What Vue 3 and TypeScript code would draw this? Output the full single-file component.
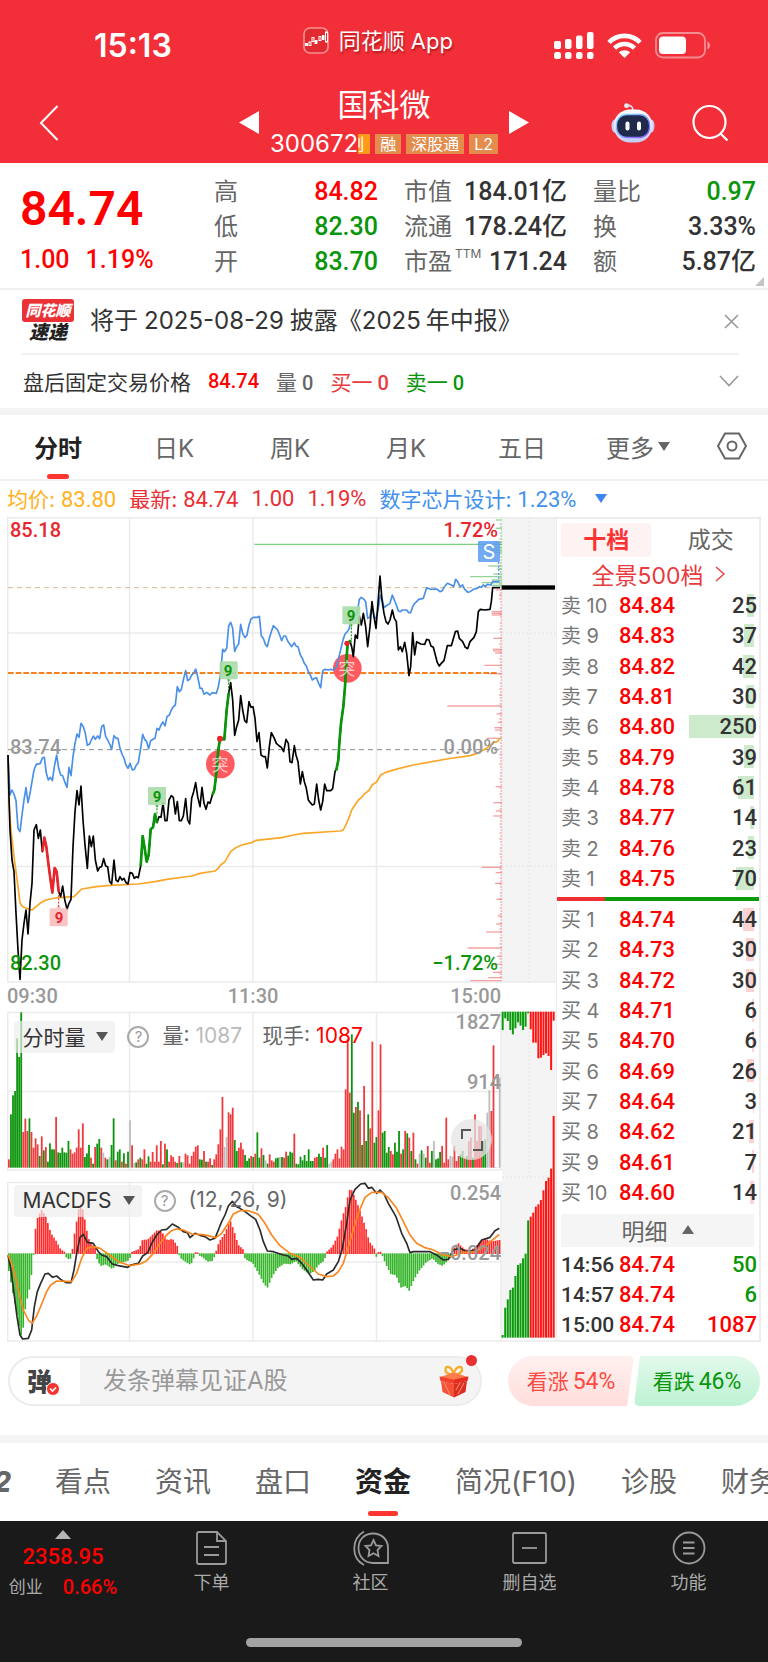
<script setup lang="ts">
import { ref } from 'vue'

type Tone = 'up' | 'down' | 'ink'
interface Stat { label: string; note?: string; value: string; tone: Tone }
interface Level { label: string; price: string; volume: number }
interface Bar { x: number; y: number; w: number; h: number; fill: string }

const RED = '#ef3b3f'
const GREEN = '#0c950c'
const GREY = '#bdbdbd'

const statColumns: Stat[][] = [
  [
    { label: '高', value: '84.82', tone: 'up' },
    { label: '低', value: '82.30', tone: 'down' },
    { label: '开', value: '83.70', tone: 'down' },
  ],
  [
    { label: '市值', value: '184.01亿', tone: 'ink' },
    { label: '流通', value: '178.24亿', tone: 'ink' },
    { label: '市盈', note: 'TTM', value: '171.24', tone: 'ink' },
  ],
  [
    { label: '量比', value: '0.97', tone: 'down' },
    { label: '换', value: '3.33%', tone: 'ink' },
    { label: '额', value: '5.87亿', tone: 'ink' },
  ],
]

const periods = ['分时', '日K', '周K', '月K', '五日', '更多']
const period = ref('分时')

const bookTabs = ['十档', '成交']
const bookTab = ref('十档')

const level = (side: string) => ([n, price, volume]: [number, string, number]): Level =>
  ({ label: `${side} ${n}`, price, volume })

const asks: Level[] = ([
  [10, '84.84', 25], [9, '84.83', 37], [8, '84.82', 42], [7, '84.81', 30], [6, '84.80', 250],
  [5, '84.79', 39], [4, '84.78', 61], [3, '84.77', 14], [2, '84.76', 23], [1, '84.75', 70],
] as [number, string, number][]).map(level('卖'))

const bids: Level[] = ([
  [1, '84.74', 44], [2, '84.73', 30], [3, '84.72', 30], [4, '84.71', 6], [5, '84.70', 6],
  [6, '84.69', 26], [7, '84.64', 3], [8, '84.62', 21], [9, '84.61', 7], [10, '84.60', 14],
] as [number, string, number][]).map(level('买'))

const trades = [
  { time: '14:56', price: '84.74', volume: 50, tone: 'down' },
  { time: '14:57', price: '84.74', volume: 6, tone: 'down' },
  { time: '15:00', price: '84.74', volume: 1087, tone: 'up' },
]

const sections = ['看点', '资讯', '盘口', '资金', '简况(F10)', '诊股', '财务']
const section = ref('资金')

/* Chart series use thirds of a pixel as their unit; the group that holds them scales down. */
const price =
  '24,735 27,860 30,960 36,1050 42,1085 48,1210 54,1320 60,1408 66,1290 72,1240 78,1200 84,1272 90,1180 96,1120 102,960 109,944 115,985 121,960 127,1025 133,983 139,1010 145,1060 151,1105 157,1148 164,1074 170,1085 176,1145 182,1160 188,1128 194,1168 201,1198 207,1180 213,1168 219,1010 225,905 231,842 237,885 243,828 249,930 255,1005 262,1075 268,978 274,1010 280,978 286,1050 293,1083 299,1072 305,1070 311,1046 317,1068 323,1070 329,1115 335,1122 342,1050 348,1110 354,1115 360,1100 366,1110 372,1105 378,1118 384,1122 390,1088 397,1090 403,1105 409,1100 415,1103 422,1068 428,978 434,1015 440,1055 446,1035 452,958 459,952 465,912 471,938 477,920 483,922 489,878 495,932 501,932 507,870 514,857 520,862 526,912 532,875 538,932 544,932 550,918 557,866 563,930 569,942 575,865 581,845 587,818 593,860 600,890 606,832 612,880 618,898 624,876 630,880 637,855 643,840 649,790 655,720 660,686 673,688 680,600 686,550 692,518 698,570 704,676 710,650 716,630 722,557 728,600 734,632 740,638 747,575 753,592 759,590 765,625 771,695 777,668 783,735 790,740 796,740 802,774 808,710 814,668 823,685 829,700 838,708 844,712 851,725 858,688 865,700 870,755 876,758 883,707 888,735 894,755 901,822 907,785 913,815 919,835 925,870 931,878 937,885 943,882 950,822 956,870 962,900 968,875 974,822 980,842 992,842 998,836 1005,785 1010,775 1015,750 1018,700 1023,640 1030,590 1035,530 1040,440 1043,400 1050,393 1055,410 1060,440 1066,375 1072,385 1078,318 1084,345 1090,310 1097,350 1103,410 1110,350 1116,275 1122,320 1128,355 1134,280 1140,198 1146,270 1152,310 1158,335 1164,342 1170,330 1177,300 1183,325 1189,335 1195,420 1201,410 1207,425 1214,397 1220,430 1227,497 1232,470 1238,368 1244,435 1250,395 1262,402 1274,403 1280,388 1287,390 1293,408 1300,412 1306,435 1312,458 1318,468 1324,460 1332,452 1342,407 1354,407 1366,365 1373,363 1378,385 1388,395 1396,412 1403,416 1410,395 1422,382 1429,365 1435,305 1441,298 1453,300 1470,298 1474,275 1478,233 1500,233'
const sector =
  '24,735 27,800 30,855 36,840 42,852 48,872 54,955 60,965 66,915 72,870 78,833 84,878 90,850 96,815 102,780 109,763 121,760 127,744 133,742 139,790 145,810 151,802 157,812 163,770 170,735 176,775 182,795 188,797 194,815 201,832 207,772 213,797 219,740 225,700 231,672 237,682 243,640 250,650 256,670 262,706 268,703 274,690 280,678 286,688 293,678 299,686 305,650 311,645 317,680 323,690 329,702 335,718 342,677 348,685 354,685 360,715 366,732 372,745 378,765 384,775 390,760 397,780 403,778 409,765 415,758 422,715 428,673 434,688 440,695 446,716 452,692 459,688 465,685 471,655 477,660 483,645 489,636 495,648 501,620 508,615 514,600 520,590 526,585 532,530 538,545 544,538 550,510 557,482 563,512 569,508 575,495 581,490 587,477 593,500 600,535 606,535 612,553 620,547 630,555 637,548 649,550 655,530 662,490 668,418 673,425 680,415 686,348 692,337 698,355 704,424 710,410 716,402 722,343 728,370 735,383 741,375 747,345 753,327 760,322 772,322 778,319 784,378 790,385 796,403 802,410 808,385 814,365 820,347 833,360 839,375 845,392 851,378 857,378 863,393 875,410 883,398 888,408 894,410 901,435 907,445 913,460 919,468 925,485 931,495 937,510 943,505 949,503 956,520 962,533 968,483 974,478 986,480 992,478 1000,480 1010,470 1017,440 1023,415 1029,390 1035,372 1042,365 1048,355 1053,320 1060,310 1066,315 1072,308 1078,268 1084,262 1092,268 1097,275 1103,325 1109,322 1116,290 1122,320 1128,325 1134,300 1141,255 1147,270 1152,293 1158,288 1170,280 1177,255 1183,270 1189,285 1195,303 1201,305 1207,300 1220,300 1226,308 1232,308 1238,290 1244,280 1250,275 1256,268 1270,265 1280,233 1292,238 1310,237 1320,245 1326,243 1332,232 1342,220 1354,225 1361,230 1367,208 1373,215 1380,230 1388,225 1394,238 1404,247 1410,245 1422,237 1432,235 1438,230 1444,232 1450,225 1456,230 1462,223 1472,225 1478,215 1498,215'
const average =
  '24,735 27,880 33,960 42,1040 50,1100 60,1178 68,1190 80,1195 96,1200 108,1190 120,1180 133,1172 150,1167 175,1163 222,1160 234,1148 245,1137 290,1130 330,1126 415,1122 465,1115 500,1108 575,1098 600,1090 645,1083 655,1075 662,1065 675,1055 692,1025 704,1015 725,1005 755,998 768,991 845,983 880,975 910,970 1020,963 1030,960 1042,935 1048,920 1055,900 1065,885 1075,870 1085,862 1092,853 1108,840 1116,825 1130,816 1142,795 1155,788 1195,776 1240,765 1280,758 1340,747 1410,737 1432,730 1460,715 1480,698 1492,695 1500,685'
const redRun = '127,1025 133,983 139,1010 145,1060 151,1105 157,1148 164,1074 170,1085 176,1145'
const greenRuns = [
  '422,1068 428,978 434,1015 440,1055 446,1035 452,958 459,952 465,912 471,938',
  '637,855 643,840 649,790 655,720 660,686 673,688 680,600 686,550',
  '1008,782 1010,775 1015,750 1018,700 1023,640 1030,590 1035,530 1040,440 1043,400 1050,393 1054,396',
]

const dif =
  '24,765 33,810 42,880 51,950 60,1005 68,1017 85,1015 95,990 103,920 112,875 122,850 135,822 145,820 158,832 170,828 182,838 190,843 200,848 213,848 222,810 230,760 240,712 250,703 262,727 280,730 295,755 305,765 320,770 337,792 355,797 383,802 392,795 415,790 428,768 443,758 455,730 470,705 485,690 500,688 517,672 535,682 550,695 562,698 570,713 585,700 600,706 615,710 630,720 645,715 655,690 665,665 675,645 685,618 697,604 710,620 720,625 735,635 755,650 767,658 780,690 790,725 802,753 820,755 850,765 865,768 875,778 890,775 905,790 920,810 940,840 955,838 968,840 980,822 1000,810 1015,785 1027,745 1040,670 1050,600 1065,568 1082,552 1095,550 1105,565 1115,562 1130,580 1140,570 1152,582 1165,610 1188,650 1205,700 1220,730 1230,758 1240,755 1290,755 1310,765 1330,780 1345,778 1360,750 1380,745 1400,755 1425,750 1445,720 1470,712 1485,692 1498,685'
const dea =
  '24,765 35,790 45,825 55,870 70,930 85,960 96,970 110,948 125,912 140,875 152,855 170,843 215,845 230,820 245,775 260,745 280,740 300,745 325,762 355,785 390,797 420,792 440,782 460,760 480,730 500,705 515,692 530,687 550,690 575,702 610,704 648,713 665,700 685,670 700,642 720,632 745,632 775,643 795,670 815,705 840,737 870,760 900,772 925,795 955,822 980,830 1000,828 1015,815 1030,790 1045,740 1060,690 1075,640 1095,592 1115,577 1145,577 1165,593 1190,625 1210,665 1230,705 1250,730 1275,743 1300,750 1325,763 1355,770 1390,757 1425,755 1450,742 1475,722 1498,703'

const PITCH = 6.16
const volumeCode =
  'r25 g160 g217 g230 g388 g332 g466 r107 r147 r110 g148 r107 r60 r88 r70 g35 r94 g52 r62 g18 g73 g55 g55 r152 g46 g44 g60 g46 g45 g80 r55 r42 r46 r60 r115 r60 r133 g32 g43 g68 r30 g12 r62 g72 g86 r60 n45 r30 g25 n32 g68 g148 r22 g48 g55 r18 g43 r12 g48 n142 r67 n14 g16 r25 g30 r25 r55 g12 g34 r18 r47 r18 r67 r18 r80 g10 r72 g55 r18 r37 r32 r18 g14 r35 g16 n16 r42 r37 r12 r35 r48 r63 r67 g25 g24 r50 g18 r18 r28 g8 r25 r40 r70 r115 r212 n62 n92 r166 r160 r180 g83 g50 r60 r75 r55 g38 g20 g28 r35 g32 r42 g106 g30 r58 g38 n22 g12 r40 r22 r18 g28 g30 n32 g32 r30 r48 g36 g48 g45 r102 g12 g10 g33 g22 g38 g20 g55 g20 g20 r30 r32 g42 g32 r60 g30 g68 n12 n18 r25 r42 r55 r28 r63 r55 r235 r385 r225 g400 g165 r182 g197 r172 g68 r245 g80 g160 r118 r378 g75 g92 r172 r370 g105 g110 g45 g62 r50 r40 g75 g48 g110 r42 g55 r110 g103 r90 g50 r105 g25 r12 n42 g52 n42 g30 r65 r15 g50 n80 g25 g28 g47 r65 r15 r150 r25 n35 n33 r65 r20 r35 g40 g50 r30 g35 r80 r90 g30 r160 r80 r125 r125 g80 g85 n165 n232 r170 r367 n2 n1 n270'
const tones: Record<string, string> = { r: RED, g: GREEN, n: GREY }
const volumeBars: Bar[] = volumeCode.split(' ').map((code, i) => {
  const h = Number(code.slice(1))
  return { x: 24 + i * PITCH, y: 503 - h, w: 5.4, h, fill: tones[code[0]] }
})

const macdKnots: [number, number][] = [
  [24, -50], [33, -100], [45, -160], [60, -245], [66, -230], [75, -150], [85, -110], [97, -25], [100, 50], [110, 105],
  [122, 130], [135, 110], [150, 60], [165, 38], [180, 10], [190, 5], [195, -8], [205, -16], [213, -10], [217, 35],
  [225, 80], [233, 130], [242, 150], [252, 100], [262, 45], [275, 25], [283, 15], [290, -20], [300, -35], [315, -30],
  [335, -45], [345, -30], [365, -25], [385, -18], [392, 3], [415, 12], [425, 40], [440, 40], [455, 55], [470, 70],
  [485, 60], [500, 38], [515, 43], [530, 20], [537, -10], [550, -20], [570, -32], [580, -8], [587, 8], [593, -3],
  [605, -8], [620, -22], [635, -20], [645, 3], [655, 35], [670, 55], [688, 98], [700, 65], [712, 25], [728, 10],
  [733, -15], [755, -25], [775, -60], [790, -90], [800, -100], [815, -65], [830, -42], [850, -28], [870, -30],
  [885, -20], [905, -45], [925, -60], [940, -50], [955, -30], [970, -20], [977, 3], [995, 20], [1010, 50], [1025, 110],
  [1035, 140], [1045, 190], [1053, 188], [1065, 160], [1080, 120], [1095, 75], [1105, 35], [1120, 15], [1128, -12],
  [1135, 10], [1145, -5], [1155, -30], [1170, -60], [1185, -62], [1200, -100], [1215, -95], [1225, -110], [1240, -75],
  [1255, -50], [1275, -25], [1295, -12], [1310, -28], [1325, -35], [1340, -20], [1355, -5], [1362, 20], [1372, 30],
  [1390, 12], [1410, 8], [1430, 25], [1450, 45], [1470, 35], [1504, 40],
]
function macdAt(x: number): number {
  for (let i = 1; i < macdKnots.length; i++) {
    const [x0, v0] = macdKnots[i - 1]
    const [x1, v1] = macdKnots[i]
    if (x <= x1) return v0 + ((v1 - v0) * (x - x0)) / (x1 - x0)
  }
  return 0
}
const macdBars: Bar[] = Array.from({ length: 240 }, (_, i) => {
  const x = 24 + i * PITCH
  const v = macdAt(x)
  const h = Math.abs(v) + 3
  return { x, y: v > 0 ? 762 - h : 760, w: 5, h, fill: v > 0 ? '#ff2b2b' : '#35b52a' }
})

const ladder: [number, number][] = [
  [30, 18], [55, 18], [97, 20], [103, 26], [112, 60], [120, 34], [127, 22], [168, 40], [177, 14], [192, 25], [200, 95],
  [210, 30], [218, 60], [226, 30], [240, 18], [255, 8], [305, 30], [310, 30], [315, 30], [385, 25], [418, 26],
  [423, 26], [429, 20], [466, 52], [491, 40], [555, 8], [588, 163], [612, 15], [637, 12], [653, 22], [660, 20],
  [685, 45], [733, 7], [830, 18], [878, 25], [903, 18], [918, 25], [1072, 60], [1088, 18], [1120, 20], [1168, 16],
  [1218, 12], [1242, 16], [1266, 47], [1314, 102], [1339, 14], [1363, 30], [1387, 26], [1403, 40], [1412, 95],
]
for (let y = 42; y < 1410; y += 9) ladder.push([y, 3 + ((y * 7) % 5)])

const depthTop = [55, 20, 28, 55, 68, 50, 32, 42, 55, 45, 5, 53, 93, 93, 140, 138, 130, 125, 133, 175, 27]
const depthBottom = [8, 90, 115, 143, 150, 185, 218, 223, 238, 252, 352, 363, 375, 393, 400, 413, 442, 470, 480, 507, 665]
const depthTone = (i: number, split: number) => (i < split ? '#0a9b0a' : '#ff1414')
</script>

<template>
  <div class="page">
    <header class="top">
      <div class="status">
        <span class="clock">15:13</span>
        <span class="app-name">
          <svg width="26" height="27" viewBox="0 0 26 27" aria-hidden="true">
            <rect x="1" y="1" width="24" height="25" rx="6" fill="#e02a30" stroke="#f88f92" stroke-width="1.6" />
            <g fill="#fff"><rect x="2" y="16" width="3" height="3" /><rect x="11.500" y="13" width="3" height="4" /><rect x="19" y="8" width="2.500" height="5" /></g>
            <g fill="none" stroke="#fff" stroke-width="1"><rect x="6" y="15" width="2" height="3.500" /><rect x="9" y="10.500" width="2" height="4" /><rect x="16" y="9.500" width="2" height="4" /><rect x="22.500" y="5" width="2" height="10" /></g>
          </svg>
          同花顺 App
        </span>
        <span class="signals">
          <svg width="40" height="28" viewBox="0 0 40 28" fill="#fff" aria-label="信号">
            <rect x="0" y="9" width="7" height="8" rx="2" /><rect x="11" y="7" width="6.500" height="10" rx="2" />
            <rect x="22" y="3.500" width="6.500" height="13.500" rx="2" /><rect x="33" y="0" width="6.500" height="17" rx="2" />
            <rect x="0" y="20" width="7" height="7" rx="2.500" /><rect x="11" y="20" width="6.500" height="7" rx="2.500" />
            <rect x="22" y="20" width="6.500" height="7" rx="2.500" /><rect x="33" y="20" width="6.500" height="7" rx="2.500" />
          </svg>
          <svg width="35" height="25" viewBox="0 0 35 25" aria-label="无线网络">
            <g fill="none" stroke="#fff" stroke-width="4.600"><path d="M2 9.500C10.500 0.700 24.500 0.700 33 9.500" /><path d="M7.500 15.200C13 9.600 22 9.600 27.500 15.200" /></g>
            <path d="M11.800 19.300C15 16.400 20 16.400 23.200 19.300L17.500 25Z" fill="#fff" />
          </svg>
          <svg width="56" height="27" viewBox="0 0 56 27" aria-label="电量">
            <rect x="1" y="1" width="49" height="24.500" rx="7" fill="none" stroke="#fff" stroke-opacity=".45" stroke-width="1.800" />
            <rect x="4" y="4.500" width="27" height="17.500" rx="4" fill="#fff" />
            <path d="M52.500 9.500C55.800 11 55.800 16 52.500 17.500Z" fill="#fff" fill-opacity=".5" />
          </svg>
        </span>
      </div>

      <div class="title-bar">
        <button class="icon-btn back" aria-label="返回">
          <svg width="20" height="36" viewBox="0 0 20 36"><path d="M18.500 1L2 18L18.500 35" fill="none" stroke="#fff" stroke-width="2" /></svg>
        </button>
        <div class="stock">
          <button class="icon-btn" aria-label="上一只">
            <svg width="20" height="23" viewBox="0 0 20 23"><path d="M20 0V23L0 11.500Z" fill="#fff" /></svg>
          </button>
          <div class="identity">
            <h1>国科微</h1>
            <p class="code"><span>300672</span><i class="tag board">创</i><i class="tag">融</i><i class="tag">深股通</i><i class="tag">L2</i></p>
          </div>
          <button class="icon-btn" aria-label="下一只">
            <svg width="20" height="23" viewBox="0 0 20 23"><path d="M0 0V23L20 11.500Z" fill="#fff" /></svg>
          </button>
        </div>
        <div class="tools">
          <button class="icon-btn" aria-label="智能助手">
            <svg width="44" height="40" viewBox="0 0 44 40">
              <defs>
                <linearGradient id="shell" x1="0" y1="0" x2="0" y2="1"><stop offset="0" stop-color="#fff" /><stop offset="1" stop-color="#c3cdf5" /></linearGradient>
                <linearGradient id="rim" x1="0" y1="0" x2="1" y2="1"><stop offset="0" stop-color="#7fe3ff" /><stop offset="1" stop-color="#8d52ff" /></linearGradient>
              </defs>
              <path d="M15.500 2.500C20 2 22 4 22 7.500" fill="none" stroke="#dfe4fa" stroke-width="1.600" />
              <circle cx="15.500" cy="2.700" r="2.400" fill="#e8ebfb" />
              <ellipse cx="3.500" cy="23" rx="3" ry="6.500" fill="#c9cdf2" /><ellipse cx="40.500" cy="23" rx="3" ry="6.500" fill="#c9cdf2" />
              <rect x="2.500" y="6.500" width="39" height="33" rx="16.500" fill="url(#shell)" />
              <rect x="5.500" y="11.500" width="33" height="23" rx="10" fill="#1f2a4c" stroke="url(#rim)" stroke-width="1.300" />
              <rect x="14.500" y="18.500" width="4" height="9" rx="2" fill="#fff" /><rect x="26" y="18.500" width="4" height="9" rx="2" fill="#fff" />
            </svg>
          </button>
          <button class="icon-btn" aria-label="搜索">
            <svg width="37" height="38" viewBox="0 0 37 38" fill="none" stroke="#fff" stroke-width="2.200"><circle cx="17.500" cy="18" r="16" /><path d="M28.500 29.500L35.500 36.500" /></svg>
          </button>
        </div>
      </div>
    </header>

    <section class="quote">
      <div class="last">
        <strong>84.74</strong>
        <span class="delta"><span>1.00</span><span>1.19%</span></span>
      </div>
      <dl v-for="(column, c) in statColumns" :key="c">
        <div v-for="stat in column" :key="stat.label">
          <dt>{{ stat.label }}<sup v-if="stat.note">{{ stat.note }}</sup></dt>
          <dd :class="stat.tone">{{ stat.value }}</dd>
        </div>
      </dl>
      <svg class="corner" width="9" height="9" viewBox="0 0 9 9" aria-hidden="true"><path d="M9 0V9H0Z" fill="#c4c4c4" /></svg>
    </section>

    <section class="notice">
      <div class="express"><b>同花顺</b><em>速递</em></div>
      <p class="notice-text">将于<span>2025-08-29</span>披露《2025<span class="after">年中报》</span></p>
      <button class="icon-btn" aria-label="关闭">
        <svg width="15" height="15" viewBox="0 0 15 15"><path d="M1 1L14 14M14 1L1 14" stroke="#999" stroke-width="1.600" /></svg>
      </button>
    </section>

    <section class="after-hours">
      <span>盘后固定交易价格</span>
      <span class="up num">84.74</span>
      <span class="muted">量<b>0</b></span>
      <span class="buy">买一<b>0</b></span>
      <span class="down">卖一<b>0</b></span>
      <button class="icon-btn" aria-label="展开">
        <svg width="20" height="12" viewBox="0 0 20 12"><path d="M1 1L10 10.500L19 1" fill="none" stroke="#999" stroke-width="1.600" /></svg>
      </button>
    </section>

    <nav class="periods">
      <button v-for="p in periods" :key="p" :class="{ active: p === period }" @click="period = p">
        {{ p }}<svg v-if="p === '更多'" width="12" height="9" viewBox="0 0 12 9"><path d="M0 0H12L6 9Z" fill="#666" /></svg>
      </button>
      <button class="settings" aria-label="设置">
        <svg width="30" height="28" viewBox="0 0 30 28" fill="none" stroke="#666" stroke-width="2"><path d="M8 1.500H22L29 14L22 26.500H8L1 14Z" /><circle cx="15" cy="14" r="4.500" /></svg>
      </button>
    </nav>

    <div class="legend">
      <span class="avg">均价: <b>83.80</b></span>
      <span class="latest">最新: <b>84.74</b></span>
      <b class="latest">1.00</b>
      <b class="latest">1.19%</b>
      <span class="sector">数字芯片设计: <b>1.23%</b></span>
      <svg width="12" height="9" viewBox="0 0 12 9" aria-hidden="true"><path d="M0 0H12L6 9Z" fill="#3b86ee" /></svg>
    </div>

    <main class="trading">
      <div class="charts">
        <svg class="plot" viewBox="0 0 549 825" role="img" aria-label="分时走势">
          <rect x="495" y="0" width="54" height="465" fill="#f4f4f4" />
          <rect x="495" y="494" width="54" height="326" fill="#f4f4f4" />
          <g stroke="#ebebeb" stroke-width="1.500" fill="none">
            <path d="M0 .75H549M0 116H495M0 349.500H495M0 465H549M.75 0V465M122.500 0V465M246 0V465M369.500 0V465M495 0V465" />
            <path d="M0 495.500H494M0 574.500H494M0 653H494M.75 495V653M122.500 495V653M246 495V653M369.500 495V653M494 495V653" />
            <path d="M0 665.500H494M0 745H494M0 824H549M.75 665V824M122.500 665V824M246 665V824M369.500 665V824M494 665V824" />
            <path d="M522 0V465M495 116H549M495 349H549M522 494V660M495 660H549" stroke-width="1" stroke-dasharray="2 2" stroke="#e4e4e4" />
          </g>

          <g transform="scale(.333333) translate(-21 -21)">
            <path d="M763 103H1505" stroke="#7ccf7c" stroke-width="4" />
            <path d="M24 233H1505" stroke="#d9b78c" stroke-width="3" stroke-dasharray="15 12" />
            <path d="M24 719H1505" stroke="#8c8c8c" stroke-width="3" stroke-dasharray="15 12" />
            <path d="M24 489H1495" stroke="#f5821f" stroke-width="6" stroke-dasharray="17 6" />
            <g stroke-width="4" stroke-opacity=".55">
              <path v-for="([y, len], i) in ladder" :key="i" :d="`M1505 ${y}h${-len}`" :stroke="y < 236 ? '#3fae3f' : '#ee5558'" />
            </g>
            <rect x="1434" y="93" width="66" height="63" rx="4" fill="#5b9bf0" fill-opacity=".85" />
            <path d="M1496 156V215" stroke="#5b9bf0" stroke-width="4" stroke-dasharray="6 5" />
            <g fill="#ff5a5f"><circle cx="661" cy="762" r="43" /><circle cx="1042" cy="475" r="43" /></g>
            <g fill="none" stroke-linejoin="round" stroke-width="5">
              <polyline :points="average" stroke="#fba628" />
              <polyline :points="sector" stroke="#4a8fe8" />
              <polyline :points="price" stroke="#000" />
            </g>
            <g fill="none" stroke-linejoin="round" stroke-width="8">
              <polyline :points="redRun" stroke="#e8262c" />
              <polyline v-for="run in greenRuns" :key="run" :points="run" stroke="#079607" />
            </g>
            <g fill="#e8262c"><circle cx="660" cy="686" r="9" /><circle cx="1041" cy="400" r="8" /></g>
            <g fill="#a9dba9" fill-opacity=".9">
              <path d="M448 831h46q4 0 4 4v46q0 4-4 4h-16l-7 12l-7-12h-16q-4 0-4-4v-46q0-4 4-4Z" />
              <path d="M663 454h46q4 0 4 4v46q0 4-4 4h-16l-7 12l-7-12h-16q-4 0-4-4v-46q0-4 4-4Z" />
              <path d="M1031 289h46q4 0 4 4v46q0 4-4 4h-16l-7 12l-7-12h-16q-4 0-4-4v-46q0-4 4-4Z" />
            </g>
            <path d="M153 1249h46q4 0 4-4v-46q0-4-4-4h-16l-7-12l-7 12h-16q-4 0-4 4v46q0 4 4 4Z" fill="#f9bcbc" fill-opacity=".9" />
            <g stroke-width="3" stroke-dasharray="6 4"><path d="M471 885V912M686 508V550M1054 343V392" stroke="#079607" /><path d="M176 1145V1195" stroke="#e8262c" /></g>
            <rect x="1505" y="226" width="160" height="13" fill="#000" />
          </g>

          <g transform="scale(.333333) translate(-21 1449)">
            <rect v-for="(b, i) in volumeBars" :key="`v${i}`" :x="b.x" :y="b.y" :width="b.w" :height="b.h" :fill="b.fill" />
            <rect v-for="(b, i) in macdBars" :key="`m${i}`" :x="b.x" :y="b.y" :width="b.w" :height="b.h" :fill="b.fill" />
            <g fill="none" stroke-linejoin="round" stroke-width="5">
              <polyline :points="dif" stroke="#2b2b2b" />
              <polyline :points="dea" stroke="#fb861c" />
            </g>
            <rect v-for="(h, i) in depthTop" :key="`t${i}`" :x="1505 + i * 7.65" y="35" width="6" :height="h" :fill="depthTone(i, 11)" />
            <rect v-for="(h, i) in depthBottom" :key="`b${i}`" :x="1505 + i * 7.65" :y="1013 - h" width="6" :height="h" :fill="depthTone(i, 11)" />
          </g>

          <g class="axis">
            <text x="3" y="20" fill="#e8262c">85.18</text>
            <text x="3" y="237" class="soft">83.74</text>
            <text x="3" y="453" fill="#0a950a">82.30</text>
            <g text-anchor="end">
              <text x="491" y="20" fill="#e8262c">1.72%</text>
              <text x="491" y="237" class="soft">0.00%</text>
              <text x="491" y="453" fill="#0a950a">−1.72%</text>
              <text x="494" y="486" class="soft">15:00</text>
              <text x="494" y="512" class="soft">1827</text>
              <text x="494" y="572" class="soft">914</text>
              <text x="494" y="683" class="soft">0.254</text>
              <text x="494" y="743" class="soft">−0.024</text>
            </g>
            <text x="0" y="486" class="soft">09:30</text>
            <text x="246" y="486" text-anchor="middle" class="soft">11:30</text>
          </g>
          <g class="mark" text-anchor="middle" fill="#0a950a">
            <text x="150" y="285">9</text><text x="221" y="159">9</text><text x="344" y="104">9</text>
            <text x="52" y="406" fill="#e8262c">9</text>
          </g>
          <g class="burst" text-anchor="middle"><text x="213" y="254">突</text><text x="340" y="158">突</text></g>
          <text class="sell" x="482" y="42" text-anchor="middle">S</text>
        </svg>

        <div class="indicator volume">
          <button class="picker">分时量<svg width="12" height="9" viewBox="0 0 12 9"><path d="M0 0H12L6 9Z" fill="#555" /></svg></button>
          <button class="help" aria-label="说明">?</button>
          <span>量: <i>1087</i></span>
          <span>现手: <i class="up">1087</i></span>
        </div>
        <div class="indicator macd">
          <button class="picker">MACDFS<svg width="12" height="9" viewBox="0 0 12 9"><path d="M0 0H12L6 9Z" fill="#555" /></svg></button>
          <button class="help" aria-label="说明">?</button>
          <span>(12, 26, 9)</span>
        </div>
        <button class="expand" aria-label="全屏">
          <svg width="22" height="22" viewBox="0 0 22 22" fill="none" stroke="#555" stroke-width="2"><path d="M1 10V1H10M21 12V21H12" /></svg>
        </button>
      </div>

      <aside class="book">
        <div class="book-tabs">
          <button v-for="t in bookTabs" :key="t" :class="{ active: t === bookTab }" @click="bookTab = t">{{ t }}</button>
        </div>
        <a class="panorama" href="#">全景500档<svg width="10" height="16" viewBox="0 0 10 16"><path d="M1 1L9 8L1 15" fill="none" stroke="#ee3a3d" stroke-width="1.400" /></svg></a>
        <table class="levels asks" aria-label="卖盘">
          <tbody>
            <tr v-for="l in asks" :key="l.label">
              <th scope="row">{{ l.label }}</th><td class="up">{{ l.price }}</td>
              <td class="vol"><i :style="{ width: `${Math.max(1, Math.round(l.volume * 0.26))}px` }"></i><span>{{ l.volume }}</span></td>
            </tr>
          </tbody>
        </table>
        <div class="balance"></div>
        <table class="levels bids" aria-label="买盘">
          <tbody>
            <tr v-for="l in bids" :key="l.label">
              <th scope="row">{{ l.label }}</th><td class="up">{{ l.price }}</td>
              <td class="vol"><i :style="{ width: `${Math.max(1, Math.round(l.volume * 0.26))}px` }"></i><span>{{ l.volume }}</span></td>
            </tr>
          </tbody>
        </table>
        <button class="detail">明细<svg width="12" height="9" viewBox="0 0 12 9"><path d="M6 0L12 9H0Z" fill="#666" /></svg></button>
        <table class="levels ticks" aria-label="成交明细">
          <tbody>
            <tr v-for="t in trades" :key="t.time">
              <th scope="row">{{ t.time }}</th><td class="up">{{ t.price }}</td><td class="vol" :class="t.tone">{{ t.volume }}</td>
            </tr>
          </tbody>
        </table>
      </aside>
    </main>

    <section class="social">
      <div class="barrage">
        <button class="toggle" aria-label="弹幕开关">弹<svg width="14" height="14" viewBox="0 0 14 14"><circle cx="7" cy="7" r="6.500" fill="#f5352f" stroke="#fff" /><path d="M4 6.500L6.500 9L10 5.500" fill="none" stroke="#fff" stroke-width="1.600" /></svg></button>
        <input type="text" aria-label="发弹幕" placeholder="发条弹幕见证A股" />
        <button class="icon-btn gift" aria-label="礼物">
          <svg width="30" height="33" viewBox="0 0 30 33">
            <g fill="none" stroke="#f3ae2b" stroke-width="2.400"><path d="M14 9C9 10 6 7 6.500 4C7 0.500 12.500 1 14.500 9" /><path d="M15 9C20 10 23.500 7 23 4C22.500 0.500 17 1 14.500 9" /></g>
            <path d="M1 12L15 7.500L29 12L15 15Z" fill="#ff7a4c" />
            <path d="M0.500 11.500L15 14.500V19L1.500 16Z" fill="#f2412d" /><path d="M29.500 11.500L15 14.500V19L28.500 16Z" fill="#e42c20" />
            <path d="M2 16L15 19V32.500L3.500 27Z" fill="#f4533a" /><path d="M28 16L15 19V32.500L26.500 27Z" fill="#dc2f23" />
            <path d="M5 17L11 30M19 29L25 18M17 25L21 18" stroke="#ff9470" stroke-width="1" />
          </svg>
        </button>
        <span class="dot"></span>
      </div>
      <div class="vote">
        <button class="bull">看涨<span>54%</span></button>
        <button class="bear">看跌<span>46%</span></button>
      </div>
    </section>

    <nav class="sections">
      <a href="#" class="cut" aria-label="L2"><i>L2</i></a>
      <a v-for="s in sections" :key="s" href="#" :class="{ active: s === section }" @click.prevent="section = s">{{ s }}</a>
    </nav>

    <footer class="dock">
      <div class="dock-items">
        <button class="index">
          <svg width="16" height="9" viewBox="0 0 16 9" aria-hidden="true"><path d="M8 0L16 9H0Z" fill="#b5b5b5" /></svg>
          <strong>2358.95</strong>
          <span class="index-foot"><small>创业</small><b>0.66%</b></span>
        </button>
        <button>
          <svg width="32" height="34" viewBox="0 0 32 34" fill="none" stroke="#9a9a9a" stroke-width="1.800"><path d="M3 1H21L30 10V31Q30 33 28 33H3Q1 33 1 31V3Q1 1 3 1Z" /><path d="M21 1V10H30M8 16H23M8 24H23" /></svg>
          下单
        </button>
        <button>
          <svg width="36" height="36" viewBox="0 0 36 36" fill="none" stroke="#9a9a9a" stroke-width="1.800"><path d="M20 3.500C11 3.500 5.500 10 5.500 18C5.500 27 12 33 20 33H35V18C35 10 29 3.500 20 3.500Z" /><path d="M11 1.500C-2 9 -2 28 11 35" /><path d="M20.500 10L23 15.300L28.500 16L24.500 20L25.500 26L20.500 23.200L15.500 26L16.500 20L12.500 16L18 15.300Z" /></svg>
          社区
        </button>
        <button>
          <svg width="36" height="34" viewBox="0 0 36 34" fill="none" stroke="#9a9a9a" stroke-width="1.800"><rect x="1" y="2" width="33" height="30" rx="1.500" /><path d="M10 17H25" /></svg>
          删自选
        </button>
        <button>
          <svg width="34" height="34" viewBox="0 0 34 34" fill="none" stroke="#9a9a9a" stroke-width="1.800"><circle cx="17" cy="17" r="15.500" /><path d="M11 11.500H22.500M11 17H22.500M11 22.500H22.500" /></svg>
          功能
        </button>
      </div>
      <div class="home"></div>
    </footer>
  </div>
</template>

<style>
body { margin: 0; background: #fff; }
</style>

<style scoped>
.page {
  --cjk: "Inter", "Noto Sans CJK SC", sans-serif;
  --num: "Roboto", "Noto Sans CJK SC", sans-serif;
  width: 100%;
  overflow: hidden;
  background: #fff;
  color: #333;
  font-family: var(--cjk);
}
.page *, .page *::before, .page *::after { box-sizing: border-box; }
button { padding: 0; border: 0; background: none; color: inherit; font-family: inherit; cursor: pointer; }
a { color: inherit; text-decoration: none; }
i { font-style: normal; }
svg { display: block; flex: none; }
.icon-btn { display: flex; align-items: center; }
.up { color: #f00; }
.down { color: #0a950a; }
.ink { color: #333; }

.top { height: 163px; background: #f22f39; color: #fff; }
.status { display: grid; grid-template-columns: 208fr 251fr 156fr; height: 82px; padding: 9px 57px 0 94px; align-items: center; }
.clock { font-size: 32px; font-weight: 600; line-height: 36px; }
.app-name { display: flex; align-items: center; gap: 10px; padding-bottom: 10px; font-size: 22px; line-height: 30px; white-space: nowrap; text-shadow: 1px 2px 2px rgba(110, 0, 0, .5); }
.signals { display: flex; align-items: center; justify-content: space-between; }
.title-bar { display: grid; grid-template-columns: 1fr auto 1fr; align-items: center; height: 81px; padding: 0 39px; }
.back { justify-self: start; }
.stock { display: flex; align-items: center; gap: 11px; }
.identity { display: flex; flex-direction: column; align-items: center; }
h1 { margin: 0; font-size: 31px; font-weight: 400; line-height: 42px; }
.code { display: flex; align-items: center; gap: 5px; margin: 0; font-size: 24px; line-height: 35px; }
.tag { height: 20px; padding: 0 5px; background: #e38c4c; font-size: 16px; line-height: 20px; }
.board { display: flex; justify-content: flex-end; width: 12px; margin-left: -5px; padding: 0 6px 0 0; overflow: hidden; background: #ff9a1a; }
.tools { display: flex; align-items: center; justify-content: flex-end; gap: 37px; }

.quote { position: relative; display: grid; grid-template-columns: 168fr 164fr 163fr 163fr; column-gap: 26px; height: 127px; padding: 11px 12px 0 20px; border-bottom: 2px solid #f0f0f0; }
.last { display: flex; flex-direction: column; color: #f00; font-family: var(--num); font-weight: 500; }
.last strong { font-size: 48px; font-weight: 600; line-height: 70px; }
.delta { display: flex; gap: 16px; font-size: 25px; line-height: 32px; }
dl { margin: 0; }
dl div { display: flex; justify-content: space-between; height: 35px; line-height: 35px; }
dt { color: #666; font-size: 24px; white-space: nowrap; }
sup { margin-left: 3px; font-size: 12px; line-height: 12px; vertical-align: 12px; }
dd { margin: 0; font-family: var(--num); font-size: 25px; font-weight: 500; white-space: nowrap; }
.corner { position: absolute; right: 4px; bottom: 2px; }

.notice { display: flex; align-items: center; height: 65px; margin: 0 29px 0 22px; padding-bottom: 1px; border-bottom: 2px solid #f0f0f0; }
.express { display: flex; flex-direction: column; align-items: center; width: 52px; font-weight: 900; font-style: italic; }
.express b { width: 52px; border-radius: 3px; background: #ea3236; color: #fff; font-size: 15px; line-height: 23px; text-align: center; }
.express em { color: #222; font-size: 19px; line-height: 22px; }
.notice-text { flex: 1; margin: 0 0 0 16px; font-size: 24px; line-height: 36px; white-space: nowrap; }
.notice-text span { margin: 0 6px; }
.notice-text .after { margin: 0 0 0 5px; }
.after-hours { display: flex; align-items: center; gap: 17px; height: 53px; padding: 0 29px 1px 23px; font-size: 21px; white-space: nowrap; }
.after-hours b, .num { font-family: var(--num); font-size: 20px; font-weight: 500; }
.after-hours b { margin-left: 5px; }
.after-hours .icon-btn { margin-left: auto; }
.muted { color: #666; }
.buy { color: #e93a3d; }

.periods { display: grid; grid-template-columns: repeat(6, 116fr) 72fr; height: 73px; border-top: 7px solid #f4f4f4; border-bottom: 2px solid #f0f0f0; }
.periods button { position: relative; display: flex; align-items: center; justify-content: center; gap: 4px; padding-bottom: 2px; color: #666; font-size: 24px; }
.periods .active { color: #222; font-weight: 700; }
.periods .active::after, .sections .active::after { content: ""; position: absolute; bottom: 0; left: 50%; width: 22px; height: 5px; margin-left: -11px; border-radius: 3px; background: #ff3530; }

.legend { display: flex; align-items: center; gap: 13px; height: 36px; padding: 0 7px 2px; font-size: 21px; white-space: nowrap; }
.legend b { font-family: var(--num); font-size: 22px; font-weight: 400; }
.legend svg { margin-left: 6px; }
.avg { color: #ffb21c; }
.latest { color: #ea2e33; }
.sector { color: #4390ee; }

.trading { display: flex; padding: 0 7px; }
.charts { position: relative; flex: 1; min-width: 0; }
.plot { width: 100%; height: auto; }
.axis { font-family: var(--num); font-size: 20px; font-weight: 500; }
.soft { fill: #999; }
.mark { font-family: var(--num); font-size: 15px; font-weight: 700; }
.burst { fill: #fff; fill-opacity: .7; font-size: 17px; }
.sell { fill: #fff; font-size: 20px; }
.indicator { position: absolute; left: 1%; display: flex; align-items: center; padding-left: 2px; color: #666; font-size: 21px; line-height: 32px; white-space: nowrap; }
.indicator > span { padding-bottom: 2px; }
.volume { top: 61%; }
.macd { bottom: 15%; }
.picker { display: flex; align-items: center; gap: 11px; height: 32px; margin-right: 12px; padding: 0 7px 2px 8px; border-radius: 4px; background: rgba(238, 238, 238, .7); color: #333; font-size: 21px; }
.help { width: 22px; height: 22px; margin-right: 13px; border: 2px solid #aaa; border-radius: 50%; color: #999; font-size: 15px; line-height: 18px; }
.volume span + span { margin-left: 20px; }
.volume i { color: #bbb; font-size: 21px; }
.volume i.up { color: #f00; }
.expand { position: absolute; top: 73%; right: 12%; display: flex; align-items: center; justify-content: center; width: 41px; height: 41px; margin-right: -2px; border-radius: 50%; background: rgba(228, 228, 228, .75); }

.book { display: flex; flex-direction: column; width: 205px; flex: none; border: 2px solid #ececec; border-left-width: 1px; }
.book-tabs { display: grid; grid-template-columns: 93fr 20fr 91fr; padding: 4px 0 0 4px; height: 38px; }
.book-tabs button { color: #666; font-size: 23px; line-height: 32px; }
.book-tabs button:last-child { grid-column: 3; margin-right: 8px; }
.book-tabs .active { border-radius: 4px; background: #fff2f2; color: #fa3432; font-weight: 700; }
.panorama { display: flex; align-items: center; justify-content: center; gap: 11px; height: 34px; color: #e93a3d; font-size: 23px; }
.levels { width: 100%; height: 303px; border-collapse: collapse; table-layout: fixed; font-family: var(--num); font-size: 22px; line-height: 26px; }
.levels th { width: 62px; padding: 0 0 0 4px; color: #777; font-family: var(--cjk); font-size: 20px; font-weight: 400; text-align: left; white-space: nowrap; }
.levels td { padding: 0; font-weight: 500; }
.levels .vol { position: relative; padding-right: 2px; text-align: right; }
.vol span { position: relative; }
.vol i { position: absolute; top: 3px; right: 5px; height: 23px; background: #cdeacd; }
.bids .vol i { background: #fbd3d3; }
.balance { height: 4px; margin: 3px 0 4px; background: linear-gradient(90deg, #ef2f33 24%, #0a9b0a 24%); }
.detail { display: flex; align-items: center; justify-content: center; gap: 14px; height: 33px; margin: 6px 5px 3px 4px; padding-bottom: 2px; background: #f5f5f5; color: #666; font-size: 23px; }
.ticks { height: 90px; }
.ticks th { padding-left: 4px; color: #333; font-family: var(--num); font-size: 21px; font-weight: 500; }

.social { display: flex; align-items: center; gap: 26px; height: 93px; padding: 0 8px 15px; }
.barrage { position: relative; display: flex; flex: 1; align-items: center; height: 50px; min-width: 0; border: 2px solid #ececec; border-radius: 25px; background: #f4f4f4; }
.toggle { position: relative; width: 70px; height: 46px; padding: 0 11px 3px 0; border-radius: 23px 0 0 23px; background: #fff; color: #444; font-size: 25px; font-weight: 900; }
.toggle svg { position: absolute; right: 20px; bottom: 8px; }
input { flex: 1; min-width: 0; height: 46px; padding: 0 23px 2px; border: 0; outline: 0; background: none; font: 400 24px/32px var(--cjk); }
input::placeholder { color: #999; opacity: 1; }
.gift { margin-right: 11px; }
.dot { position: absolute; top: -3px; right: 3px; width: 11px; height: 11px; border-radius: 50%; background: #e92f31; }
.vote { display: flex; width: 252px; }
.vote button { height: 50px; flex: 1; padding-bottom: 3px; font-size: 21px; white-space: nowrap; }
.vote span { margin-left: 4px; font-family: var(--num); font-size: 23px; }
.bull { border-radius: 25px 5px 5px 25px; background: linear-gradient(#fff1f0, #ffdedb); color: #fb4a42; clip-path: polygon(0 0, 100% 0, calc(100% - 7px) 100%, 0 100%); }
.bear { border-radius: 5px 25px 25px 5px; background: linear-gradient(#e2f9ec, #bdf2d3); color: #0a950a; clip-path: polygon(6px 0, 100% 0, 100% 100%, 0 100%); }

.sections { display: flex; gap: 44px; height: 86px; border-top: 8px solid #f4f4f4; color: #666; font-size: 28px; line-height: 78px; white-space: nowrap; }
.sections a { position: relative; flex: none; }
.sections .active { color: #222; font-weight: 700; }
.sections .active::after { bottom: 5px; width: 30px; margin-left: -15px; }
.sections .cut { display: flex; justify-content: flex-end; width: 11px; overflow: hidden; font-weight: 800; }
.cut i { font-style: italic; }

.dock { height: 141px; background: #1a1a1a; color: #ababab; }
.dock-items { display: grid; grid-template-columns: 132fr repeat(4, 159fr); height: 117px; }
.dock button { display: flex; flex-direction: column; align-items: center; justify-content: flex-start; gap: 4px; padding-top: 9px; font-size: 18px; line-height: 26px; }
.dock button svg { height: 36px; }
.dock .index { gap: 4px; padding-right: 6px; font-family: var(--num); color: #f00; }
.dock .index svg { height: 9px; }
.index strong { font-size: 22px; font-weight: 500; line-height: 27px; }
.index-foot { display: flex; align-items: center; gap: 20px; }
.index small { color: #ababab; font-size: 17px; }
.index b { font-size: 20px; font-weight: 500; }
.home { width: 36%; height: 9px; margin: 0 auto; border-radius: 5px; background: #a3a3a3; }
</style>
